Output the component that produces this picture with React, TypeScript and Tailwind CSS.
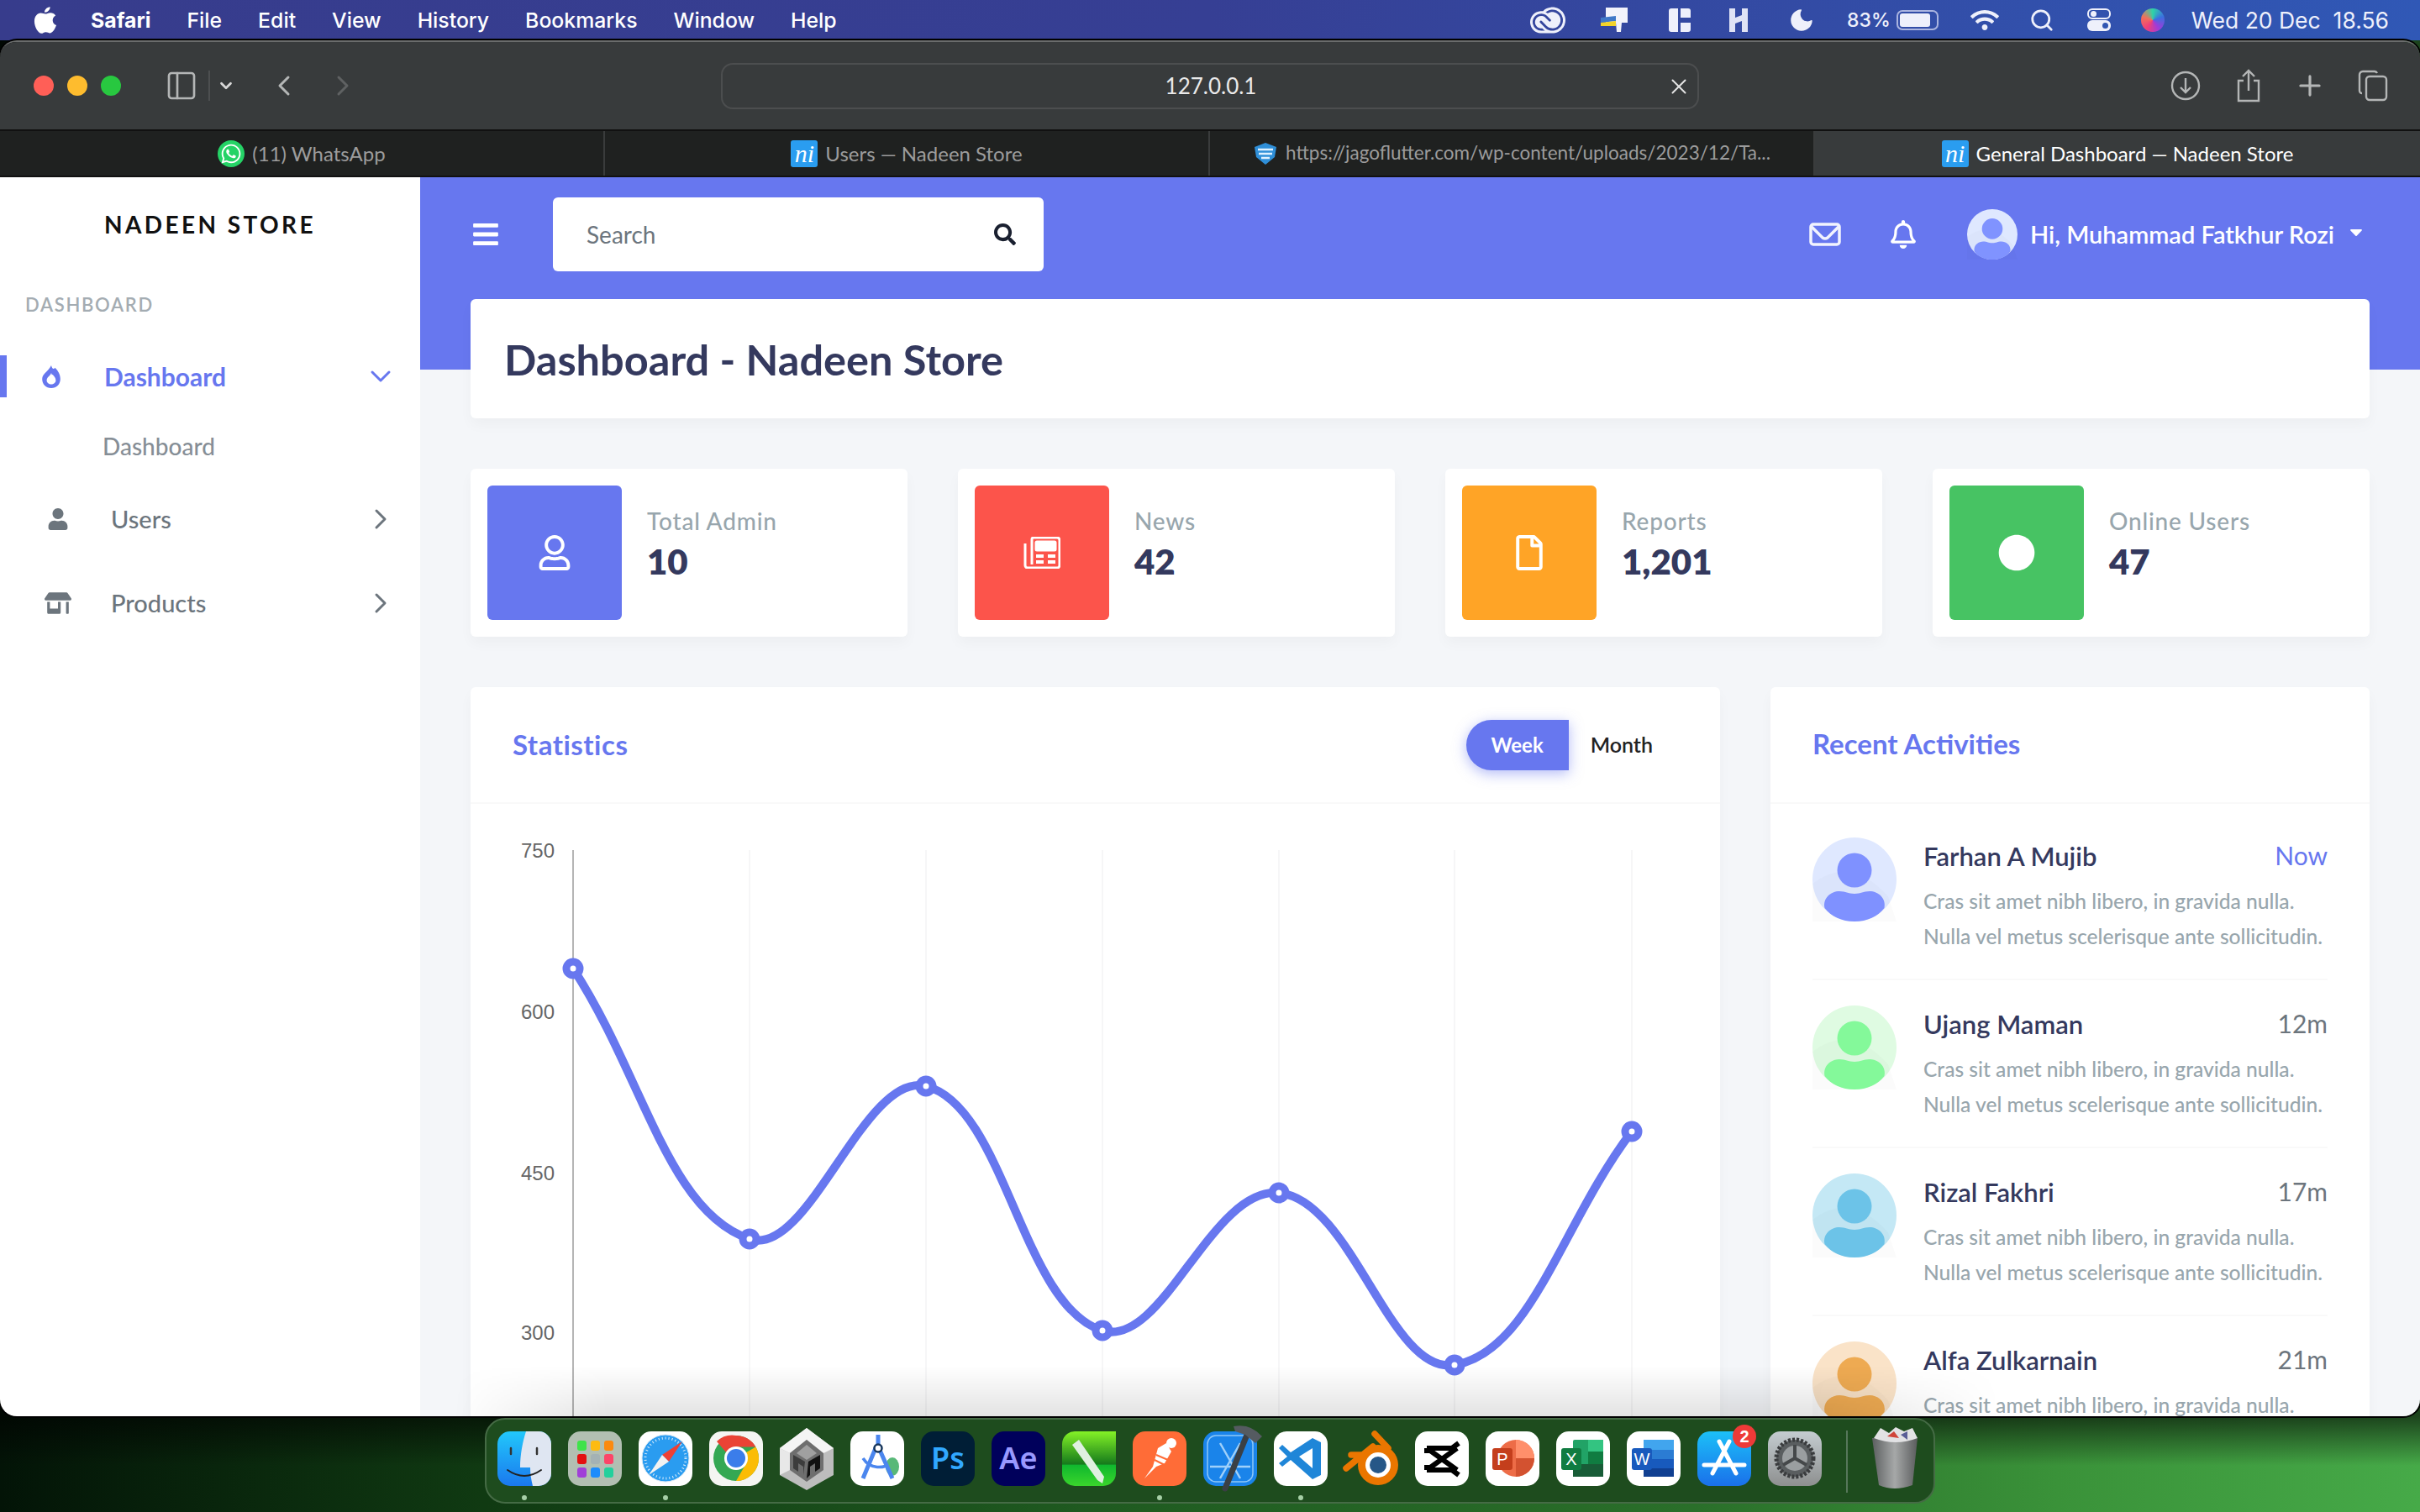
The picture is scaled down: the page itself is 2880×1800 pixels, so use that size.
import React from "react";
import { FaBars, FaSearch, FaRegBell, FaUser, FaStoreAlt, FaRegUser, FaRegFile, FaCircle, FaWhatsapp, FaCaretDown, FaWifi } from "react-icons/fa";
import { SiAdobecreativecloud } from "react-icons/si";
import { ChevronDown, ChevronRight, ChevronLeft, X, Plus, Search as LSearch, Moon, PanelLeft } from "lucide-react";

const NiIcon = () => (
  <span className="flex h-[32px] w-[32px] items-center justify-center rounded-[3px] bg-[#2a9df0] font-['Liberation_Serif',serif] text-[30px] italic leading-none text-white">ni</span>
);

const ShieldIcon = () => (
  <svg width="30" height="28" viewBox="0 0 30 28">
    <path d="M15 1 L28 6 L26 18 L15 27 L4 18 L2 6 Z" fill="#2f8fd8" />
    <path d="M6 9h18M7 14h16M10 19h10" stroke="#dff1ff" strokeWidth="2.5" />
  </svg>
);

const Tab = ({ icon, text, active, small }: { icon: React.ReactNode; text: string; active?: boolean; small?: boolean }) => (
  <div className={active ? "flex h-full w-[720px] items-center justify-center gap-[9px] bg-[#383b3c] text-white" : "flex h-full w-[720px] items-center justify-center gap-[9px] border-r-2 border-[#3a3c3c] bg-[#1f2120] text-[#9c9c9c]"}>
    {icon}
    <span className={small ? "text-[22.5px] leading-none" : "text-[24px] leading-none"}>{text}</span>
  </div>
);

const MenuBar = () => (
  <div className="flex h-[48px] items-center bg-[linear-gradient(90deg,#373c8c,#363f94_50%,#3058b6)] pl-[40px] pr-[37px] font-['Inter',sans-serif] text-[24.8px] font-medium leading-none text-white">
    <svg width="28" height="32" viewBox="0 0 30 34" className="mr-[40px]">
      <path fill="#fff" d="M21 0c.3 3-2.600 7-7 7 -.4-3.400 3-6.700 7-7zM15 9c2 0 3.500-1.500 6.500-1.500 2.500 0 5 1.200 6.500 3.500-5.500 3.200-4.500 10.500 1 12.500-1.300 3.500-4.500 10-8 10-2 0-3-1.300-5.500-1.300S12 34 10 34c-4 0-9-8.500-9-15.500C1 12 5 8 9 8c2.500 0 4.300 1 6 1z" />
    </svg>
    <div className="flex gap-[43px]">
      <span className="font-bold">Safari</span>
      <span>File</span>
      <span>Edit</span>
      <span>View</span>
      <span>History</span>
      <span>Bookmarks</span>
      <span>Window</span>
      <span>Help</span>
    </div>
    <div className="ml-auto flex items-center text-[#eef0fb]">
      <SiAdobecreativecloud size={42} className="mr-[40px]" />
      <svg width="40" height="30" viewBox="0 0 40 30" className="mr-[42px]">
        <path d="M8 0h26v18H27l-1 11h-5l-1-11H8z" fill="#f2f3fb" />
        <path d="M2 12 L20 10 V16 L2 18z" fill="#3f78c8" />
        <path d="M2 18 L20 16 V22 H2z" fill="#f2d22a" />
      </svg>
      <svg width="28" height="28" viewBox="0 0 28 28" className="mr-[44px]">
        <path d="M1 3a3 3 0 013-3h8v28H4a3 3 0 01-3-3z M15 0h9a3 3 0 013 3v8H15z M15 17h12v8a3 3 0 01-3 3h-9z" fill="#eef0fb" />
      </svg>
      <svg width="24" height="28" viewBox="0 0 24 28" className="mr-[46px]">
        <path d="M1 0h7v11l8-3V0h7v28h-7V15l-8 3v10H1z" fill="#dfe3f5" />
      </svg>
      <Moon size={34} fill="#eef0fb" strokeWidth={0} className="mr-[37px]" />
      <span className="mr-[7px] text-[23px]">83%</span>
      <span className="mr-[38px] flex h-[24px] w-[50px] items-center rounded-[7px] border-2 border-[#aab4e0] p-[2px]">
        <span className="h-full w-[36px] rounded-[3px] bg-[#eef0fb]" />
      </span>
      <FaWifi size={34} className="mr-[36px]" />
      <LSearch size={30} strokeWidth={2.2} className="mr-[39px]" />
      <span className="mr-[36px] flex h-[28px] w-[28px] flex-col gap-[1px]">
        <span className="flex h-[13px] items-center justify-start rounded-[6px] border-2 border-[#eef0fb] pl-[2px]"><span className="h-[7px] w-[7px] rounded-full bg-[#eef0fb]" /></span>
        <span className="flex h-[13px] items-center justify-end rounded-[6px] bg-[#eef0fb] pr-[3px]"><span className="h-[7px] w-[7px] rounded-full bg-[#3156b2]" /></span>
      </span>
      <span className="mr-[32px] h-[28px] w-[28px] rounded-full bg-[conic-gradient(#2dd4a8,#3b6fe0,#a03ad8,#ef3f7a,#f2705a,#2dd4a8)]" />
      <span className="text-[26.5px] font-normal">Wed 20 Dec&nbsp; 18.56</span>
    </div>
  </div>
);

const Toolbar = () => (
  <div className="flex h-[104px] items-center bg-[#383b3c] pl-[40px] pr-[38px] text-[#b4b6b6]">
    <span className="mr-[16px] h-[24px] w-[24px] rounded-full bg-[#ff5f57]" />
    <span className="mr-[16px] h-[24px] w-[24px] rounded-full bg-[#febc2e]" />
    <span className="mr-[52px] h-[24px] w-[24px] rounded-full bg-[#28c840]" />
    <PanelLeft size={40} strokeWidth={1.6} className="mr-[12px]" />
    <span className="mr-[8px] h-[36px] w-[2px] bg-[#4d4f50]" />
    <ChevronDown size={22} strokeWidth={3} className="mr-[38px] text-[#d8d8d8]" />
    <ChevronLeft size={40} strokeWidth={1.8} className="mr-[30px]" />
    <ChevronRight size={40} strokeWidth={1.8} className="mr-[430px] text-[#5f6162]" />
    <div className="relative flex h-[55px] w-[1164px] items-center justify-center rounded-[14px] border-2 border-[#4c4e4f] pl-[2px] text-[26px] text-[#eaeaea]">
      127.0.0.1
      <X size={30} strokeWidth={1.6} className="absolute right-[7px] top-[11px] text-[#e4e4e4]" />
    </div>
    <div className="ml-auto flex items-center gap-[38px]">
      <svg width="36" height="36" viewBox="0 0 36 36" fill="none" stroke="#b4b6b6" strokeWidth="2.4" className="mr-[3px]"><circle cx="18" cy="18" r="16" /><path d="M18 9v17M12 20l6 6 6-6" /></svg>
      <svg width="32" height="40" viewBox="0 0 32 40" fill="none" stroke="#b4b6b6" strokeWidth="2.4"><path d="M10 14H4v24h24V14h-6M16 26V2M9 9l7-7 7 7" /></svg>
      <Plus size={38} strokeWidth={2} />
      <svg width="36" height="38" viewBox="0 0 36 38" fill="none" stroke="#b4b6b6" strokeWidth="2.4"><rect x="10" y="8" width="24" height="28" rx="4" /><path d="M5 28a3 3 0 01-3-3V6a4 4 0 014-4h14a4 4 0 013 2" /></svg>
    </div>
  </div>
);

const Sidebar = () => (
  <aside className="h-full w-[500px] shrink-0 bg-white">
    <div className="flex h-[112px] items-center justify-center text-[28px] font-bold tracking-[3.4px] text-[#111]">NADEEN STORE</div>
    <div className="pl-[30px] pt-[29px] text-[22px] font-semibold leading-none tracking-[1.7px] text-[#a4acb2]">DASHBOARD</div>
    <div className="mt-[49px] flex h-[50px] items-center border-l-[8px] border-[#6777ef] text-[#6777ef]">
      <span className="flex w-[106px] justify-center">
        <svg width="22" height="27" viewBox="0 0 24 30"><path fillRule="evenodd" fill="#6777ef" d="M12 0c1 4 3 6 5 3 4 4 7 9 7 15 0 7-5 12-12 12S0 25 0 18C0 11 8 8 12 0zM12 10c-1 4-6 5-6 10 0 3 3 5 6 5s6-2 6-5c0-4-3-6-4-8-1 1-1 1-2-2z" /></svg>
      </span>
      <span className="pl-[10px] text-[30px] font-bold">Dashboard</span>
      <ChevronDown size={40} strokeWidth={1.8} className="ml-auto mr-[27px]" />
    </div>
    <div className="mt-[44px] pl-[122px] text-[28px] font-medium leading-none text-[#868e96]">Dashboard</div>
    <div className="mt-[48px] flex h-[50px] items-center pl-[8px] text-[#6c757d]">
      <span className="flex w-[122px] justify-center"><FaUser size={26} /></span>
      <span className="pl-[2px] text-[29px] font-medium">Users</span>
      <ChevronRight size={40} strokeWidth={1.8} className="ml-auto mr-[27px]" />
    </div>
    <div className="mt-[50px] flex h-[50px] items-center pl-[8px] text-[#6c757d]">
      <span className="flex w-[122px] justify-center"><FaStoreAlt size={32} /></span>
      <span className="pl-[2px] text-[29px] font-medium">Products</span>
      <ChevronRight size={40} strokeWidth={1.8} className="ml-auto mr-[27px]" />
    </div>
  </aside>
);

const Avatar = ({ bg, fg, size = 100 }: { bg: string; fg: string; size?: number }) => (
  <svg width={size} height={size} viewBox="0 0 100 100" className="shrink-0">
    <circle cx="50" cy="50" r="50" fill={bg} />
    <path d="M0 55 Q45 20 90 70 L100 100 H0Z" fill="#000" opacity="0.015" />
    <ellipse cx="50" cy="39" rx="20.500" ry="20.500" fill={fg} />
    <path d="M14.500 84 C12 72 22 64 32 64 C40 64 42 67 50 67 C58 67 60 64 68 64 C78 64 88 72 85.500 84 C78 94 65 100 50 100 C35 100 22 94 14.500 84Z" fill={fg} />
  </svg>
);

const Stat = ({ color, icon, label, value }: { color: string; icon: React.ReactNode; label: string; value: string }) => (
  <div className="flex h-[200px] w-[520px] rounded-[6px] bg-white p-[20px] shadow-[0_8px_16px_rgba(0,0,0,0.03)]">
    <div className={`flex h-[160px] w-[160px] items-center justify-center rounded-[6px] text-white ${color}`}>{icon}</div>
    <div className="ml-[30px] pt-[23px]">
      <div className="text-[28px] font-medium leading-[38px] tracking-[0.8px] text-[#98a6ad]">{label}</div>
      <div className="mt-[4px] text-[42px] font-extrabold leading-[50px] text-[#34395e]">{value}</div>
    </div>
  </div>
);

const pts: [number, number][] = [[122, 196], [332, 518], [542, 336], [752, 627], [962, 463], [1171, 668], [1382, 390]];

function spline(p: [number, number][], t = 0.4) {
  const cps = p.map((cur, i) => {
    const prev = p[Math.max(i - 1, 0)];
    const next = p[Math.min(i + 1, p.length - 1)];
    const d01 = Math.hypot(cur[0] - prev[0], cur[1] - prev[1]);
    const d12 = Math.hypot(next[0] - cur[0], next[1] - cur[1]);
    const fa = (t * d01) / (d01 + d12);
    const fb = (t * d12) / (d01 + d12);
    return {
      a: [cur[0] - fa * (next[0] - prev[0]), cur[1] - fa * (next[1] - prev[1])],
      b: [cur[0] + fb * (next[0] - prev[0]), cur[1] + fb * (next[1] - prev[1])],
    };
  });
  let d = `M${p[0][0]} ${p[0][1]}`;
  for (let i = 1; i < p.length; i++) {
    d += ` C${cps[i - 1].b[0]} ${cps[i - 1].b[1]} ${cps[i].a[0]} ${cps[i].a[1]} ${p[i][0]} ${p[i][1]}`;
  }
  return d;
}

const Chart = () => (
  <svg width="1487" height="730" viewBox="0 0 1487 730" className="block">
    {[332, 542, 752, 962, 1171, 1382].map((x) => (
      <line key={x} x1={x} x2={x} y1="55" y2="730" stroke="#f6f6f7" strokeWidth="2" />
    ))}
    <line x1="122" x2="122" y1="55" y2="730" stroke="#b5b5b5" strokeWidth="2" />
    {[["750", 56], ["600", 248], ["450", 440], ["300", 630]].map(([t, y]) => (
      <text key={t as string} x="100" y={(y as number) + 8} textAnchor="end" fontFamily="'Liberation Sans',sans-serif" fontSize="24" fill="#666">{t}</text>
    ))}
    <path d={spline(pts)} fill="none" stroke="#6777ef" strokeWidth="10" />
    {pts.map(([x, y]) => (
      <circle key={x} cx={x} cy={y} r="8" fill="#fff" stroke="#6777ef" strokeWidth="9" />
    ))}
  </svg>
);

const activities = [
  { name: "Farhan A Mujib", time: "Now", bg: "#dfe8ff", fg: "#7f91ff", timeColor: "text-[#6777ef]" },
  { name: "Ujang Maman", time: "12m", bg: "#dffbe2", fg: "#84f99a", timeColor: "text-[#6c757d]" },
  { name: "Rizal Fakhri", time: "17m", bg: "#c4e8f5", fg: "#6cc3e8", timeColor: "text-[#6c757d]" },
  { name: "Alfa Zulkarnain", time: "21m", bg: "#fae3c8", fg: "#eeaa52", timeColor: "text-[#6c757d]" },
];

const Main = () => (
  <main className="h-full flex-1 bg-[linear-gradient(#6777ef_229px,#f4f6f9_229px)] px-[60px]">
    <nav className="flex h-[145px] items-center pb-[10px] text-white">
      <FaBars size={34} className="ml-[1px] mr-[63px] shrink-0" />
      <div className="flex h-[88px] w-[584px] items-center justify-between rounded-[6px] bg-white pl-[40px] pr-[33px] text-[28px] text-[#6c757d]">
        Search
        <FaSearch size={26} className="text-[#1a2030]" />
      </div>
      <svg width="38" height="28" viewBox="0 0 38 28" fill="none" stroke="#f2f3fe" strokeWidth="3.500" className="ml-auto mr-[57px]"><rect x="2" y="2" width="34" height="24" rx="3" /><path d="M3 5 L16 18 Q19 20 22 18 L35 5" /></svg>
      <FaRegBell size={34} className="mr-[59px]" />
      <span className="mr-[15px]"><Avatar bg="#dfe8ff" fg="#8093ff" size={60} /></span>
      <span className="text-[29px] font-semibold">Hi, Muhammad Fatkhur Rozi</span>
      <FaCaretDown size={24} className="mb-[6px] ml-[14px] mr-[4px]" />
    </nav>
    <div className="flex h-[142px] items-center rounded-[6px] bg-white pl-[40px] pt-[2px] text-[50.5px] font-bold text-[#34395e] shadow-[0_8px_16px_rgba(0,0,0,0.03)]">Dashboard - Nadeen Store</div>
    <div className="mt-[60px] flex gap-[60px]">
      <Stat color="bg-[#6777ef]" label="Total Admin" value="10" icon={<FaRegUser size={42} />} />
      <Stat color="bg-[#fc544b]" label="News" value="42" icon={
        <svg width="44" height="38" viewBox="0 0 44 38" fill="none" stroke="#fff" strokeWidth="3"><path d="M10 3a2 2 0 012-2h28a3 3 0 013 3v30a3 3 0 01-3 3H5" /><path d="M5 37a3 3 0 01-3-3V8" /><path d="M10 3v30" /><rect x="15" y="6" width="23" height="10" rx="1" fill="#fff" /><path d="M15 23h9M29 23h9M15 30h9M29 30h9" strokeWidth="4" /></svg>
      } />
      <Stat color="bg-[#ffa426]" label="Reports" value="1,201" icon={<FaRegFile size={42} />} />
      <Stat color="bg-[#47c363]" label="Online Users" value="47" icon={<FaCircle size={44} />} />
    </div>
    <div className="mt-[60px] flex gap-[60px]">
      <section className="w-[1487px] rounded-[6px] bg-white shadow-[0_8px_16px_rgba(0,0,0,0.03)]">
        <div className="flex h-[139px] items-center border-b-2 border-[#f9f9f9] pl-[50px] pr-[80px]">
          <h4 className="text-[33px] font-bold tracking-[0.5px] text-[#6777ef]">Statistics</h4>
          <div className="ml-auto flex h-[60px] w-[122px] items-center justify-center rounded-l-[30px] bg-[#6777ef] text-[24px] font-bold text-white shadow-[0_4px_16px_rgba(103,119,239,0.5)]">Week</div>
          <div className="ml-[26px] text-[25px] font-semibold text-[#222]">Month</div>
        </div>
        <Chart />
      </section>
      <section className="w-[713px] rounded-[6px] bg-white shadow-[0_8px_16px_rgba(0,0,0,0.03)]">
        <div className="flex h-[139px] items-center border-b-2 border-[#f9f9f9] pb-[2px] pl-[50px]">
          <h4 className="text-[33px] font-bold text-[#6777ef]">Recent Activities</h4>
        </div>
        <div className="px-[50px] pt-[40px]">
          {activities.map((a) => (
            <div key={a.name} className="mb-[30px] flex h-[170px] gap-[32px] border-b-2 border-[#f9f9f9]">
              <Avatar bg={a.bg} fg={a.fg} />
              <div className="flex-1">
                <div className="flex items-center justify-between">
                  <span className="text-[31px] font-semibold leading-[44px] text-[#34395e]">{a.name}</span>
                  <span className={`mb-[2px] text-[30px] leading-[40px] ${a.timeColor}`}>{a.time}</span>
                </div>
                <p className="mt-[11px] whitespace-nowrap text-[24.6px] font-medium leading-[42px] text-[#98a6ad]">Cras sit amet nibh libero, in gravida nulla.<br />Nulla vel metus scelerisque ante sollicitudin.</p>
              </div>
            </div>
          ))}
        </div>
      </section>
    </div>
  </main>
);

const D = ({ children, dot }: { children: React.ReactNode; dot?: boolean }) => (
  <div className="flex w-[64px] flex-col items-center">
    <svg width="64" height="65" viewBox="0 0 64 65" className="overflow-visible">{children}</svg>
    <span className={dot ? "mt-[11px] h-[6px] w-[6px] rounded-full bg-[#a6cfa6]" : "mt-[11px] h-[6px] w-[6px]"} />
  </div>
);

const Sq = ({ fill = "#fff" }: { fill?: string }) => <rect width="64" height="65" rx="15" fill={fill} />;

const Dock = () => (
  <div className="flex justify-center pt-[2px]">
    <div className="flex h-[102px] w-[1726px] items-start rounded-[24px] border-2 border-[#456b45] bg-[#1e4c1e] pl-[13px] pt-[14px]">
      <div className="flex gap-[20px]">
        <D dot>
          <defs><linearGradient id="fb" x1="0" y1="0" x2="0" y2="1"><stop offset="0" stopColor="#22c8fb" /><stop offset="1" stopColor="#1a78ee" /></linearGradient></defs>
          <Sq fill="url(#fb)" />
          <path d="M34 0h15a15 15 0 0115 15v35a15 15 0 01-15 15H42c-2-8-3-14-3-22H27C27 28 30 12 34 0z" fill="#dfe6f2" />
          <path d="M16 20v7M47 20v7" stroke="#333" strokeWidth="2.500" strokeLinecap="round" />
          <path d="M12 46q20 14 40 0" stroke="#222" strokeWidth="2" fill="none" strokeLinecap="round" />
        </D>
        <D>
          <Sq fill="#b2bfb2" />
          {[["#3fe34a","#fdbb10","#fb8a10"],["#e41010","#a4b2b4","#fc4568"],["#a040d8","#1d8cfb","#22d09c"]].map((row, r) => row.map((c, i) => (
            <rect key={c} x={11 + i * 16} y={11 + r * 16} width="11" height="12" rx="3" fill={c} />
          )))}
        </D>
        <D dot>
          <Sq />
          <circle cx="32" cy="32" r="28" fill="#2a9cf0" stroke="#d8e8f5" strokeWidth="1" />
          <circle cx="32" cy="32" r="24" fill="none" stroke="#d8ecfb" strokeWidth="3" strokeDasharray="1 3" />
          <path d="M52 12 L36 36 L28 28Z" fill="#ee4034" />
          <path d="M12 52 L36 36 L28 28Z" fill="#f2f2f2" />
        </D>
        <D>
          <Sq fill="#f4f5f2" />
          <circle cx="32" cy="32" r="27" fill="#34a853" />
          <path d="M32 5a27 27 0 0123.400 13.500H32a13.500 13.500 0 00-11.700 6.800L9 12a27 27 0 0123-7z" fill="#ea4335" />
          <path d="M55.400 18.500A27 27 0 0132 59l11.700-20.300A13.500 13.500 0 0043.700 25.300z" fill="#fbbc05" />
          <circle cx="32" cy="32" r="14" fill="#fff" /><circle cx="32" cy="32" r="11" fill="#3b7dea" />
        </D>
        <D>
          <path d="M32 -4 L64 20 V52 L32 70 L0 52 V20Z" fill="#bdbdbd" />
          <path d="M32 -4 L64 20 L52 26 L32 10 L12 26 L0 20Z" fill="#f5f5f5" />
          <path d="M0 20 L12 26 V46 L0 52Z" fill="#e8e8e8" />
          <path d="M32 10 L52 26 V46 L32 60 L12 46 V26Z" fill="#6e6e6e" />
          <path d="M32 16 L44 26 L32 34 L20 26Z" fill="#a0a0a0" />
          <path d="M34 36 L48 28 V44 L42 48 V38 L36 42 V52 L32 56Z" fill="#111" />
          <path d="M30 36 L16 28 V44 L22 48 V38 L28 42 V52Z" fill="#3c3c3c" />
        </D>
        <D>
          <Sq />
          <path d="M15 32 C24 46 40 44 48 38" stroke="#4b86ee" strokeWidth="3.500" fill="none" />
          <ellipse cx="50" cy="42" rx="8" ry="11" fill="#58b878" />
          <path d="M33 4v14M30 20 L15 56M34 20 L50 56" stroke="#4b86ee" strokeWidth="5" fill="none" />
          <circle cx="33" cy="20" r="4.500" fill="#fff" stroke="#16365c" strokeWidth="2.500" />
        </D>
        <D>
          <Sq fill="#001e36" />
          <text x="32" y="45" textAnchor="middle" fontFamily="'Noto Sans',sans-serif" fontSize="36" fontWeight="600" fill="#31a8ff">Ps</text>
        </D>
        <D>
          <Sq fill="#00005b" />
          <text x="32" y="45" textAnchor="middle" fontFamily="'Noto Sans',sans-serif" fontSize="36" fontWeight="600" fill="#9999ff">Ae</text>
        </D>
        <D>
          <defs><linearGradient id="gp" x1="0" y1="0" x2="0" y2="1"><stop offset="0" stopColor="#84f226" /><stop offset="0.6" stopColor="#157a1c" /><stop offset="0.62" stopColor="#10b82e" /><stop offset="1" stopColor="#3ad62c" /></linearGradient></defs>
          <path d="M15 0H64V50A15 15 0 0149 65H15A15 15 0 010 50V15A15 15 0 0115 0Z" fill="url(#gp)" />
          <path d="M12 16 L20 10 L50 54 L48 62 L42 58Z" fill="#dff0e0" />
        </D>
        <D dot>
          <Sq fill="#ff6c37" />
          <path d="M14 56 L24 42 L30 20 L40 14 L46 24 L38 38 L28 42Z" fill="#fff" />
          <path d="M28 28 L42 34M26 34 L38 40" stroke="#ff6c37" strokeWidth="2" />
          <circle cx="46" cy="14" r="6" fill="#fff" />
        </D>
        <D>
          <Sq fill="#1a84ea" />
          <rect x="5" y="5" width="54" height="55" rx="10" fill="none" stroke="#8fc8f8" strokeWidth="1.500" />
          <path d="M20 14 L44 56M44 14 L20 56M8 42H56" stroke="#9fd0fa" strokeWidth="2.500" fill="none" />
          <path d="M26 68 L52 4" stroke="#3a3f45" strokeWidth="7" strokeLinecap="round" />
          <path d="M36 -6 Q56 -10 70 6 L62 14 L50 4 L38 0Z" fill="#555b61" />
        </D>
        <D dot>
          <Sq />
          <path d="M46 8 L56 13 V52 L46 57 L20 34 L10 42 L6 38 L16 30 L6 20 L10 16 L20 25Z M46 20 L30 30 L46 44Z" fill="#1f86d8" fillRule="evenodd" />
        </D>
        <D>
          <path d="M36 3 L52 20 M2 44 L34 18 M8 28 H34" stroke="#ea7600" strokeWidth="7.500" strokeLinecap="round" fill="none" />
          <circle cx="40" cy="40" r="24" fill="#ea7600" />
          <circle cx="40" cy="40" r="15" fill="#fff" />
          <circle cx="40" cy="40" r="10" fill="#265787" />
        </D>
        <D>
          <Sq />
          <path d="M14 20 H44 L52 14 M14 46 H44 L52 52 M14 20 L50 46 M50 20 L14 46 M14 20 V26 M14 40 V46" stroke="#000" strokeWidth="6" fill="none" />
        </D>
        <D>
          <Sq />
          <circle cx="36" cy="32" r="22" fill="#ed6c47" />
          <path d="M36 10a22 22 0 0122 22H36z" fill="#ff8f6b" />
          <path d="M36 32h22a22 22 0 01-22 22z" fill="#d35230" />
          <rect x="8" y="20" width="24" height="26" rx="3" fill="#c43e1c" />
          <text x="20" y="40" textAnchor="middle" fontFamily="'Liberation Sans',sans-serif" fontSize="20" fill="#fff">P</text>
        </D>
        <D>
          <Sq />
          <rect x="20" y="10" width="36" height="44" rx="2" fill="#21a366" />
          <rect x="38" y="10" width="18" height="14" fill="#33c481" />
          <rect x="38" y="24" width="18" height="15" fill="#107c41" />
          <rect x="20" y="39" width="36" height="15" fill="#185c37" />
          <rect x="6" y="20" width="24" height="26" rx="3" fill="#107c41" />
          <text x="18" y="40" textAnchor="middle" fontFamily="'Liberation Sans',sans-serif" fontSize="20" fill="#fff">X</text>
        </D>
        <D>
          <Sq />
          <rect x="20" y="10" width="36" height="44" rx="2" fill="#2b7cd3" />
          <rect x="20" y="10" width="36" height="12" fill="#41a5ee" />
          <rect x="20" y="33" width="36" height="11" fill="#185abd" />
          <rect x="20" y="44" width="36" height="10" fill="#103f91" />
          <rect x="6" y="20" width="24" height="26" rx="3" fill="#185abd" />
          <text x="18" y="40" textAnchor="middle" fontFamily="'Liberation Sans',sans-serif" fontSize="20" fill="#fff">W</text>
        </D>
        <D>
          <defs><linearGradient id="as" x1="0" y1="0" x2="0" y2="1"><stop offset="0" stopColor="#1cc0f8" /><stop offset="1" stopColor="#1a70ea" /></linearGradient></defs>
          <Sq fill="url(#as)" />
          <path d="M38 12 L18 50 M26 12 L46 50 M8 40 H56" stroke="#fff" strokeWidth="5" strokeLinecap="round" fill="none" />
          <circle cx="56" cy="6" r="14" fill="#ee3a38" />
          <text x="56" y="13" textAnchor="middle" fontFamily="'Liberation Sans',sans-serif" fontSize="20" fontWeight="700" fill="#fff">2</text>
        </D>
        <D>
          <defs><linearGradient id="se" x1="0" y1="0" x2="0" y2="1"><stop offset="0" stopColor="#c4ccd0" /><stop offset="1" stopColor="#8e9090" /></linearGradient></defs>
          <Sq fill="url(#se)" />
          <circle cx="32" cy="32" r="22" fill="#5a5e60" stroke="#3a3c3e" strokeWidth="5" strokeDasharray="3 2" />
          <circle cx="32" cy="32" r="15" fill="#9a9ea0" />
          <path d="M32 32 V16 M32 32 L46 40 M32 32 L18 40" stroke="#45484a" strokeWidth="4" />
        </D>
      </div>
      <span className="ml-[29px] mt-[-1px] h-[74px] w-[2px] bg-[#56775a]" />
      <svg width="60" height="76" viewBox="0 0 60 76" className="ml-[27px] mt-[-6px]">
        <defs><linearGradient id="tr" x1="0" y1="0" x2="1" y2="0"><stop offset="0" stopColor="#5c5f60" /><stop offset="0.5" stopColor="#a6a8a8" /><stop offset="1" stopColor="#5a5c5d" /></linearGradient></defs>
        <path d="M2 14 L56 14 L50 70 Q28 78 10 70Z" fill="url(#tr)" />
        <path d="M4 14 L12 2 L22 8 L30 1 L40 6 L50 2 L56 14 Q30 24 4 14Z" fill="#e2e2e4" />
        <path d="M20 12 L28 6 L34 14Z" fill="#d0453a" /><path d="M36 10 L44 6 L44 16Z" fill="#5a5e96" />
      </svg>
    </div>
  </div>
);

export default function App() {
  return (
    <div className="flex h-[1800px] w-[2880px] flex-col overflow-hidden bg-[linear-gradient(180deg,rgba(0,0,0,0.6)_1686px,rgba(0,0,0,0)_1745px),linear-gradient(90deg,#031407,#103a12_20%,#1f5a20_45%,#2a6f2a_70%,#3a9239_85%,#46aa48)] font-['Lato',sans-serif]">
      <MenuBar />
      <div className="relative flex h-[1638px] flex-col overflow-hidden rounded-[20px] border-t-2 border-[#6a6c6c] shadow-[0_0_0_2px_#000]">
        <Toolbar />
        <div className="flex h-[57px] items-center border-y-2 border-[#111]">
          <Tab icon={<span className="flex h-[32px] w-[32px] items-center justify-center rounded-full bg-[#25d366] text-white"><FaWhatsapp size={26} /></span>} text="(11) WhatsApp" />
          <Tab icon={<NiIcon />} text="Users — Nadeen Store" />
          <Tab small icon={<ShieldIcon />} text="https://jagoflutter.com/wp-content/uploads/2023/12/Ta..." />
          <Tab active icon={<NiIcon />} text="General Dashboard — Nadeen Store" />
        </div>
        <div className="flex min-h-0 flex-1 overflow-hidden">
          <Sidebar />
          <Main />
        </div>
        <div className="pointer-events-none absolute bottom-0 left-[540px] h-[60px] w-[1840px] bg-[linear-gradient(transparent,rgba(0,0,0,0.11))] [mask-image:linear-gradient(90deg,transparent,black_10%,black_88%,transparent)]" />
      </div>
      <Dock />
    </div>
  );
}
